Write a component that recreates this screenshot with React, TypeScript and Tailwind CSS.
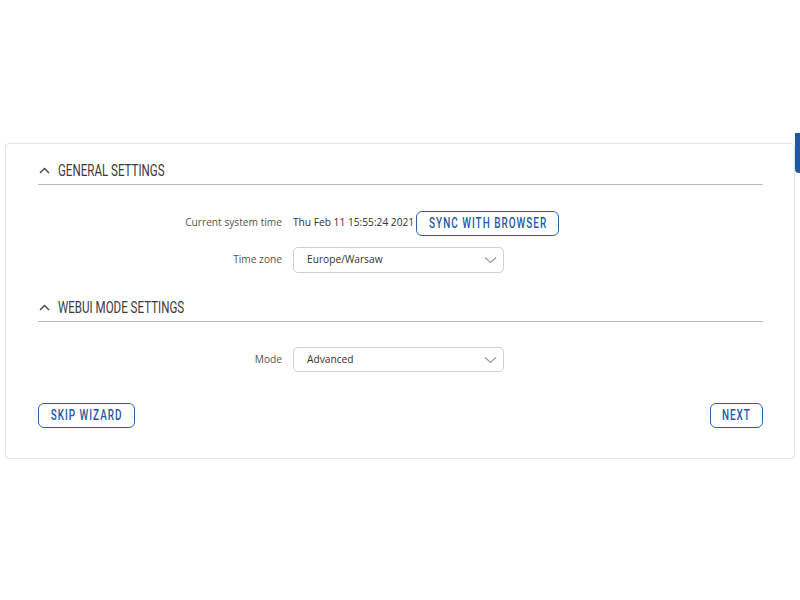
import React from "react";

const cond = { fontFamily: 'Roboto, "Liberation Sans", sans-serif' };
const body = { fontFamily: '"Open Sans", "Noto Sans", sans-serif' };

function ChevronUp() {
  return (
    <svg width="11" height="7" viewBox="0 0 11 7" className="ml-[1px] mr-[8px]">
      <path d="M1 6 L5.5 1.5 L10 6" fill="none" stroke="#444" strokeWidth="1.4" />
    </svg>
  );
}

function ChevronDown() {
  return (
    <svg width="13" height="8" viewBox="0 0 13 8">
      <path d="M1 1.5 L6.5 6.5 L12 1.5" fill="none" stroke="#9a9a9a" strokeWidth="1.2" />
    </svg>
  );
}

function Heading({ title, pt }: { title: string; pt: string }) {
  return (
    <div className={"flex items-center h-[40px] border-b border-[#b8b8b8] " + pt}>
      <ChevronUp />
      <span
        className="inline-block whitespace-nowrap text-[17px] text-[#3a3a3a] origin-left scale-x-[0.68]"
        style={cond}
      >
        {title}
      </span>
    </div>
  );
}

function Select({ value, h }: { value: string; h: string }) {
  return (
    <div className={"w-[211px] border border-[#cfcfcf] rounded-[5px] flex items-center justify-between pl-[13px] pr-[6px] text-[10.2px] text-[#333] " + h}>
      <span>{value}</span>
      <ChevronDown />
    </div>
  );
}

function OutlineBtn({ children, className = "" }: { children: React.ReactNode; className?: string }) {
  return (
    <div
      className={"h-[25px] border border-[#2c63a8] rounded-[6px] flex items-center justify-center text-[#1d5aa5] " + className}
    >
      <span
        className="inline-block whitespace-nowrap text-[14px] font-medium tracking-[1.4px] scale-x-[0.71]"
        style={cond}
      >
        {children}
      </span>
    </div>
  );
}

export default function App() {
  return (
    <div className="w-[800px] h-[600px] bg-white relative overflow-hidden" style={body}>
      <div className="absolute right-0 top-[133px] w-[5px] h-[40px] bg-[#1d5aa5] rounded-bl-[4px]" />
      <div className="pt-[143px] pl-[5px] pr-[5px]">
        <div className="border border-[#e3e3e3] rounded-[4px] h-[316px] pl-[32px] pr-[31px]">
          <div className="mt-[1px]">
            <Heading title="GENERAL SETTINGS" pt="pt-[12px]" />
          </div>
          <div className="flex items-center mt-[25px] h-[26px]">
            <div className="w-[244px] text-right text-[10.2px] text-[#555]">Current system time</div>
            <div className="ml-[11px] text-[10.2px] text-[#333]">Thu Feb 11 15:55:24 2021</div>
            <OutlineBtn className="ml-[2px] w-[143px]">SYNC WITH BROWSER</OutlineBtn>
          </div>
          <div className="flex items-center mt-[11px] h-[26px]">
            <div className="w-[244px] text-right text-[10.2px] text-[#555]">Time zone</div>
            <div className="ml-[11px]">
              <Select value="Europe/Warsaw" h="h-[26px]" />
            </div>
          </div>
          <div className="mt-[9px]">
            <Heading title="WEBUI MODE SETTINGS" pt="pt-[12px]" />
          </div>
          <div className="flex items-center mt-[25px] h-[25px]">
            <div className="w-[244px] text-right text-[10.2px] text-[#555]">Mode</div>
            <div className="ml-[11px]">
              <Select value="Advanced" h="h-[25px]" />
            </div>
          </div>
          <div className="flex justify-between mt-[31px]">
            <OutlineBtn className="w-[97px]">SKIP WIZARD</OutlineBtn>
            <OutlineBtn className="w-[53px]">NEXT</OutlineBtn>
          </div>
        </div>
      </div>
    </div>
  );
}
